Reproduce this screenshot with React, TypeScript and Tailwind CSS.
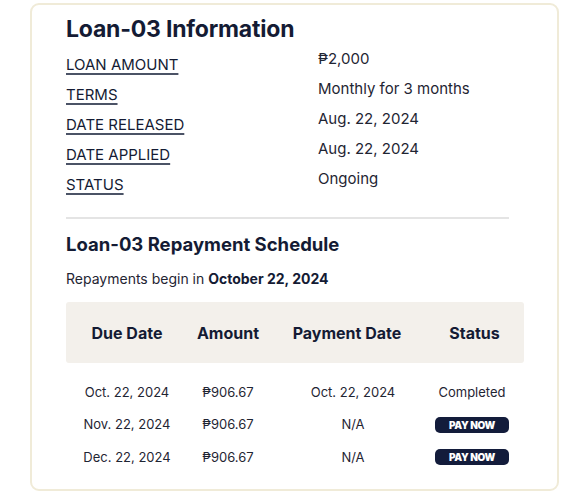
import React from 'react';

const details = [
  { label: 'LOAN AMOUNT', value: '₱2,000' },
  { label: 'TERMS', value: 'Monthly for 3 months' },
  { label: 'DATE RELEASED', value: 'Aug. 22, 2024' },
  { label: 'DATE APPLIED', value: 'Aug. 22, 2024' },
  { label: 'STATUS', value: 'Ongoing' },
];

const schedule = [
  { due: 'Oct. 22, 2024', amount: '₱906.67', paid: 'Oct. 22, 2024', status: 'Completed' },
  { due: 'Nov. 22, 2024', amount: '₱906.67', paid: 'N/A', status: 'pay' },
  { due: 'Dec. 22, 2024', amount: '₱906.67', paid: 'N/A', status: 'pay' },
];

const cols = 'grid grid-cols-[122px_80px_158px_97px]';

export default function App() {
  return (
    <div className="pl-[30px] pt-[3px] bg-white font-['Inter',sans-serif] text-[#141b34]">
      <div className="w-[529px] h-[488px] border-2 border-[#f0ebd8] rounded-[9px] pl-[34px] pr-[33px] pt-[9px]">
        <h1 className="text-[23px] leading-[30px] font-bold tracking-[-0.2px]">Loan-03 Information</h1>

        {/* loan details */}
        <div className="flex">
          <div className="w-[252px] pt-[6px]">
            {details.map((d) => (
              <div key={d.label} className="h-[30px] flex items-center">
                <span className="text-[15px] underline decoration-[#4b5366] decoration-[1.5px] underline-offset-[3px]">
                  {d.label}
                </span>
              </div>
            ))}
          </div>
          <div>
            {details.map((d) => (
              <div key={d.label} className="h-[30px] flex items-center text-[15px] text-[#1f2533]">
                {d.value}
              </div>
            ))}
          </div>
        </div>

        <div className="w-[443px] h-[2px] bg-[#e4e4e4] mt-[17px]" />

        <h2 className="mt-[13px] text-[18.5px] leading-[24px] font-bold">Loan-03 Repayment Schedule</h2>
        <p className="mt-[13px] text-[14px] leading-[20px] text-[#1f2533]">
          Repayments begin in <span className="font-bold text-[#141b34]">October 22, 2024</span>
        </p>

        {/* schedule table */}
        <div className={`${cols} mt-[13px] h-[61px] items-center bg-[#f3f0eb] rounded-[3px] text-[16px] font-bold text-center`}>
          <div>Due Date</div>
          <div>Amount</div>
          <div>Payment Date</div>
          <div>Status</div>
        </div>

        <div className="pt-[13px] text-[13px] text-[#1f2533]">
          {schedule.map((r) => (
            <div key={r.due} className={`${cols} h-[32.5px] items-center text-center`}>
              <div>{r.due}</div>
              <div>{r.amount}</div>
              <div className="pl-[12px]">{r.paid}</div>
              <div className="flex justify-center pr-[5px]">
                {r.status === 'pay' ? (
                  <button className="w-[74px] h-[16px] rounded-[5px] bg-[#131c3b] text-white text-[10px] leading-none font-black tracking-[-0.3px]">
                    PAY NOW
                  </button>
                ) : (
                  <span>{r.status}</span>
                )}
              </div>
            </div>
          ))}
        </div>
      </div>
    </div>
  );
}
